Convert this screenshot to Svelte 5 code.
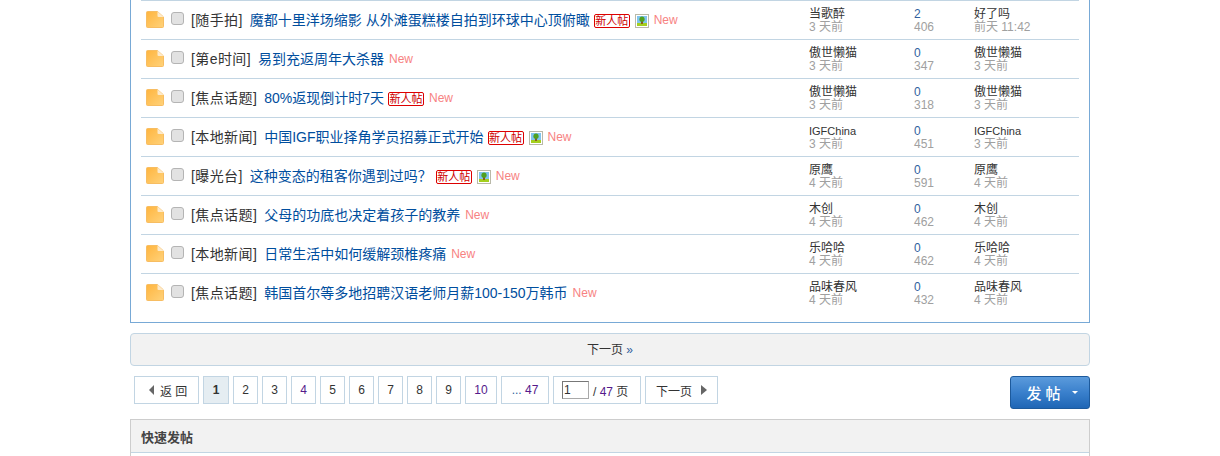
<script>
	const threads = [
		{ cat: '随手拍', title: '魔都十里洋场缩影 从外滩蛋糕楼自拍到环球中心顶俯瞰', isNew: true, pic: true, author: '当歌醉', date: '3 天前', replies: 2, views: 406, last: '好了吗', lastDate: '前天 11:42' },
		{ cat: '第e时间', title: '易到充返周年大杀器', author: '傲世懒猫', date: '3 天前', replies: 0, views: 347, last: '傲世懒猫', lastDate: '3 天前' },
		{ cat: '焦点话题', title: '80%返现倒计时7天', isNew: true, author: '傲世懒猫', date: '3 天前', replies: 0, views: 318, last: '傲世懒猫', lastDate: '3 天前' },
		{ cat: '本地新闻', title: '中国IGF职业择角学员招募正式开始', isNew: true, pic: true, author: 'IGFChina', date: '3 天前', replies: 0, views: 451, last: 'IGFChina', lastDate: '3 天前', latin: true },
		{ cat: '曝光台', title: '这种变态的租客你遇到过吗？', isNew: true, pic: true, author: '原鹰', date: '4 天前', replies: 0, views: 591, last: '原鹰', lastDate: '4 天前' },
		{ cat: '焦点话题', title: '父母的功底也决定着孩子的教养', author: '木创', date: '4 天前', replies: 0, views: 462, last: '木创', lastDate: '4 天前' },
		{ cat: '本地新闻', title: '日常生活中如何缓解颈椎疼痛', author: '乐哈哈', date: '4 天前', replies: 0, views: 462, last: '乐哈哈', lastDate: '4 天前' },
		{ cat: '焦点话题', title: '韩国首尔等多地招聘汉语老师月薪100-150万韩币', author: '品味春风', date: '4 天前', replies: 0, views: 432, last: '品味春风', lastDate: '4 天前' }
	];
	const pages = [2, 3, 4, 5, 6, 7, 8, 9];
</script>

<div class="wrap">
	<div class="list">
		{#each threads as t}
			<div class="row">
				<svg class="folder" width="18" height="17" viewBox="0 0 18 17">
					<defs>
						<linearGradient id="fold" x1="0" y1="0" x2="1" y2="1">
							<stop offset="0" stop-color="#ffb53f" />
							<stop offset="1" stop-color="#ffd27a" />
						</linearGradient>
					</defs>
					<path d="M0.5 1.5 Q0.5 0.5 1.5 0.5 H11.5 L17.5 6 V15.5 Q17.5 16.5 16.5 16.5 H1.5 Q0.5 16.5 0.5 15.5 Z" fill="url(#fold)" stroke="#f7bd62" />
					<path d="M11.5 0.5 L17.5 6 H12.5 Q11.5 6 11.5 5 Z" fill="#fdeacb" />
				</svg>
				<span class="check"></span>
				<div class="title">
					<span class="cat">[{t.cat}]</span>
					<a class="link" href="#top">{t.title}</a>
					{#if t.isNew}<span class="newbie">新人帖</span>{/if}
					{#if t.pic}
						<svg class="pic" width="14" height="14" viewBox="0 0 14 14">
							<rect x="0.5" y="0.5" width="13" height="13" fill="#fff" stroke="#b9b9a8" />
							<rect x="2" y="2" width="10" height="7" fill="#7fc4ee" />
							<rect x="2" y="9" width="10" height="3" fill="#a4cf1e" />
							<rect x="6" y="7" width="2" height="3" fill="#8a5a20" />
							<circle cx="7" cy="5.2" r="2.6" fill="#4fa01f" />
						</svg>
					{/if}
					<span class="new">New</span>
				</div>
				<div class="cell author"><span class="name" class:latin={t.latin}>{t.author}</span><span class="sub">{t.date}</span></div>
				<div class="cell count"><span class="num">{t.replies}</span><span class="sub">{t.views}</span></div>
				<div class="cell lastpost"><span class="name" class:latin={t.latin}>{t.last}</span><span class="sub">{t.lastDate}</span></div>
			</div>
		{/each}
	</div>

	<div class="nextbar">下一页 <span class="raquo">»</span></div>

	<div class="pager-row">
		<div class="pager">
			<span class="pg back"><i class="tri left"></i>返 回</span>
			<span class="pg cur">1</span>
			{#each pages as p}
				<span class="pg" class:visited={p === 4}>{p}</span>
			{/each}
			<span class="pg ten visited">10</span>
			<span class="pg last"><span><span class="dots">...</span> <span class="visited">47</span></span></span>
			<span class="pg jump"><span class="input">1</span><span>/ <span class="visited">47</span> 页</span></span>
			<span class="pg next">下一页<i class="tri right"></i></span>
		</div>
		<div class="post-btn">发 帖<i class="caret"></i></div>
	</div>

	<div class="quick">
		<div class="quick-head">快速发帖</div>
	</div>
</div>

<style>
	:global(body) {
		margin: 0;
		background: #fff;
		overflow: hidden;
	}

	.wrap {
		width: 960px;
		margin: 0 auto;
		height: 456px;
		overflow: hidden;
		font-family: "Liberation Sans", "Noto Sans CJK SC", sans-serif;
		font-size: 12px;
		color: #333;
	}

	.list {
		box-sizing: border-box;
		height: 323px;
		padding: 0 10px;
		border: 1px solid #78a9d6;
		border-top: none;
	}

	.row {
		display: flex;
		align-items: center;
		box-sizing: border-box;
		height: 39px;
		border-top: 1px solid #c2d5e3;
	}

	.folder {
		flex: none;
		margin: -1px 0 0 5px;
	}

	.check {
		flex: none;
		box-sizing: border-box;
		width: 13px;
		height: 13px;
		margin: -3px 0 0 7px;
		border: 1px solid #b4b4b4;
		border-radius: 3px;
		background: #e2e2e2;
	}

	.title {
		flex: none;
		display: flex;
		align-items: center;
		box-sizing: border-box;
		width: 625px;
		padding-left: 7px;
		font-size: 14px;
		line-height: 18px;
		white-space: nowrap;
	}

	.cat {
		margin-right: 7px;
		letter-spacing: 0.4px;
	}

	.link {
		color: #004e9e;
		text-decoration: none;
	}

	.newbie {
		box-sizing: border-box;
		width: 36px;
		height: 14px;
		margin: 1px 0 0 4px;
		border: 1px solid #d00;
		border-radius: 2px;
		font-size: 11px;
		line-height: 12px;
		color: #c00;
		text-align: center;
	}

	.pic {
		margin: 1px 0 0 5px;
	}

	.new {
		margin-left: 5px;
		font-size: 12px;
		color: #f78282;
	}

	.cell {
		flex: none;
		display: flex;
		flex-direction: column;
		line-height: 13px;
		margin-top: 2px;
	}

	.author {
		width: 105px;
	}

	.count {
		width: 60px;
	}

	.name {
		color: #333;
	}

	.latin {
		font-size: 11px;
	}

	.num {
		color: #315f9e;
	}

	.sub {
		color: #a0a0a0;
	}

	.nextbar {
		box-sizing: border-box;
		height: 33px;
		margin-top: 10px;
		border: 1px solid #c2d5e3;
		border-radius: 4px;
		background: #f2f2f2;
		text-align: center;
		line-height: 33px;
		color: #333;
	}

	.raquo {
		color: #315f9e;
	}

	.pager-row {
		display: flex;
		justify-content: space-between;
		align-items: flex-start;
		height: 43px;
		margin-top: 10px;
		padding-left: 4px;
	}

	.pager {
		display: flex;
		gap: 4px;
	}

	.pg {
		display: flex;
		align-items: center;
		justify-content: center;
		box-sizing: border-box;
		width: 25px;
		height: 28px;
		border: 1px solid #c2d5e3;
		background: #fff;
		color: #333;
	}

	.visited {
		color: #551a8b;
	}

	.dots {
		color: #315f9e;
	}

	.back {
		width: 65px;
		justify-content: flex-start;
		padding-left: 14px;
	}

	.cur {
		width: 26px;
		background: #e5edf2;
		font-weight: bold;
	}

	.ten {
		width: 32px;
	}

	.last {
		width: 48px;
	}

	.jump {
		width: 88px;
		justify-content: flex-start;
		padding-left: 8px;
	}

	.input {
		box-sizing: border-box;
		width: 27px;
		height: 18px;
		margin-right: 4px;
		border: 1px solid #a9a9a9;
		border-top-color: #777;
		border-left-color: #777;
		padding-left: 1px;
		line-height: 16px;
	}

	.next {
		width: 73px;
	}

	.tri {
		display: block;
		width: 0;
		height: 0;
		border-top: 5px solid transparent;
		border-bottom: 5px solid transparent;
	}

	.tri.left {
		margin-right: 6px;
		border-right: 5px solid #666;
	}

	.tri.right {
		margin-left: 9px;
		border-left: 6px solid #666;
	}

	.post-btn {
		display: flex;
		align-items: center;
		justify-content: center;
		box-sizing: border-box;
		width: 80px;
		height: 33px;
		padding-left: 4px;
		border: 1px solid #1d5a9c;
		border-radius: 3px;
		background: linear-gradient(#5b9bdc, #3a80cc 50%, #1f66b5);
		color: #fff;
		font-size: 15px;
		font-weight: 500;
	}

	.caret {
		display: block;
		width: 0;
		height: 0;
		margin-left: 11px;
		border-top: 3px solid #fff;
		border-left: 3px solid transparent;
		border-right: 3px solid transparent;
	}

	.quick {
		height: 60px;
		border: 1px solid #cdcdcd;
		border-bottom: none;
	}

	.quick-head {
		box-sizing: border-box;
		height: 33px;
		padding-left: 10px;
		border-bottom: 1px solid #c2d5e3;
		background: #f2f2f2;
		font-size: 13px;
		font-weight: bold;
		line-height: 35px;
		color: #444;
	}
</style>
